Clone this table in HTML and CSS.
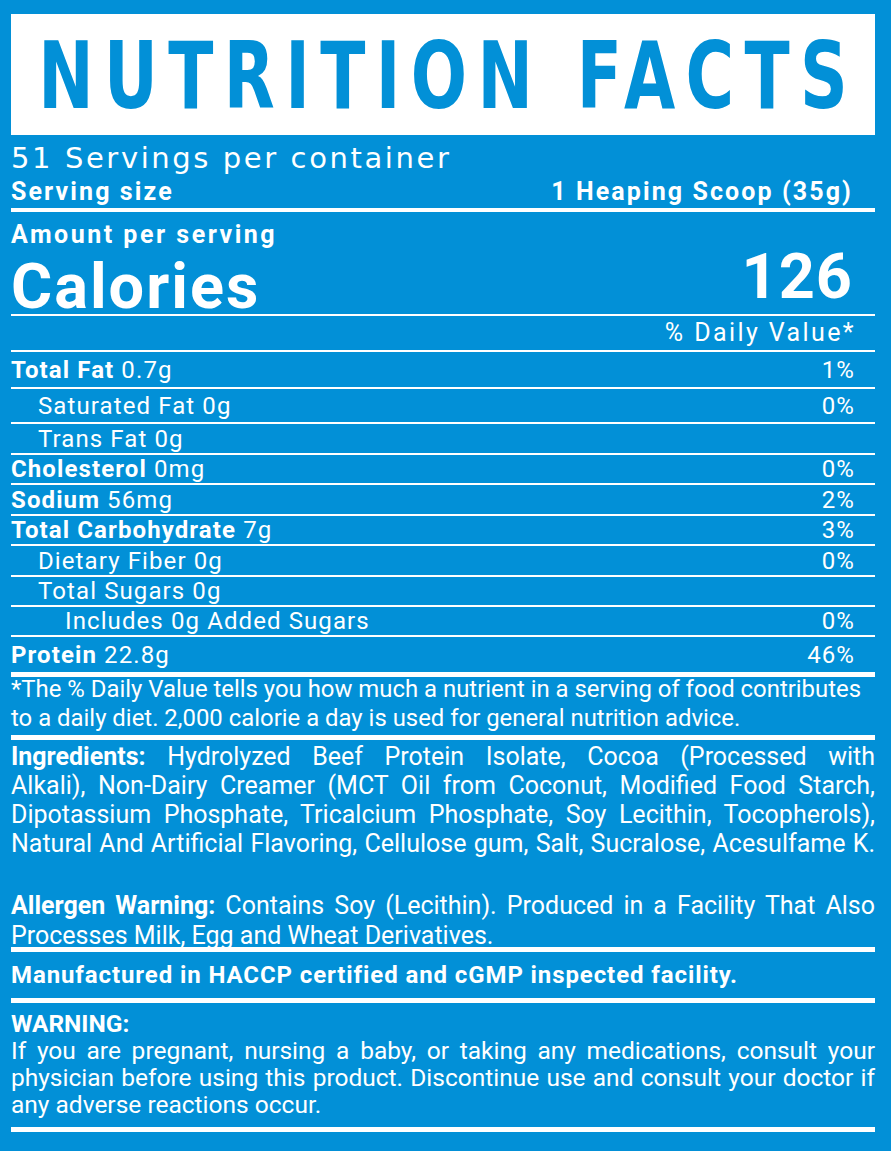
FILE: index.html
```html
<!DOCTYPE html>
<html lang="en">
<head>
<meta charset="utf-8">
<title>Nutrition Facts</title>
<link rel="stylesheet" href="styles.css">
</head>
<body>
<div class="label">
  <div class="title-box"><h1 class="title">NUTRITION FACTS</h1></div>
  <div class="servings">51 Servings per container</div>
  <div class="serving-size"><span>Serving size</span><span>1 Heaping Scoop (35g)</span></div>
  <div class="rule"></div>
  <div class="amount">Amount per serving</div>
  <div class="calories"><span class="cal-label">Calories</span><span class="cal-num">126</span></div>
  <div class="rule thin"></div>
  <div class="dv-head">% Daily Value*</div>
  <div class="rule thin"></div>
  <div class="row h35"><span><b>Total Fat</b> 0.7g</span><span>1%</span></div>
  <div class="rule thin"></div>
  <div class="row h33 indent1"><span>Saturated Fat 0g</span><span>0%</span></div>
  <div class="rule thin"></div>
  <div class="row h29 indent1"><span>Trans Fat 0g</span><span></span></div>
  <div class="rule thin"></div>
  <div class="row"><span><b>Cholesterol</b> 0mg</span><span>0%</span></div>
  <div class="rule thin"></div>
  <div class="row h29"><span><b>Sodium</b> 56mg</span><span>2%</span></div>
  <div class="rule thin"></div>
  <div class="row"><span><b>Total Carbohydrate</b> 7g</span><span>3%</span></div>
  <div class="rule thin"></div>
  <div class="row h29 indent1"><span>Dietary Fiber 0g</span><span>0%</span></div>
  <div class="rule thin"></div>
  <div class="row indent1"><span>Total Sugars 0g</span><span></span></div>
  <div class="rule thin"></div>
  <div class="row indent2"><span>Includes 0g Added Sugars</span><span>0%</span></div>
  <div class="rule thin"></div>
  <div class="row h35"><span><b>Protein</b> 22.8g</span><span>46%</span></div>
  <div class="rule thick"></div>
  <p class="footnote">*The % Daily Value tells you how much a nutrient in a serving of food contributes<br>to a daily diet. 2,000 calorie a day is used for general nutrition advice.</p>
  <div class="rule thick"></div>
  <p class="ingredients"><b>Ingredients:</b> Hydrolyzed Beef Protein Isolate, Cocoa (Processed with<br>Alkali), Non-Dairy Creamer (MCT Oil from Coconut, Modified Food Starch,<br>Dipotassium Phosphate, Tricalcium Phosphate, Soy Lecithin, Tocopherols),<br>Natural And Artificial Flavoring, Cellulose gum, Salt, Sucralose, Acesulfame K.</p>
  <p class="allergen"><span class="just-line"><b>Allergen Warning:</b> Contains Soy (Lecithin). Produced in a Facility That Also</span>Processes Milk, Egg and Wheat Derivatives.</p>
  <div class="rule thick over"></div>
  <p class="facility"><b>Manufactured in HACCP certified and cGMP inspected facility.</b></p>
  <div class="rule thick"></div>
  <div class="warning">
    <b class="warn-head">WARNING:</b>
    <p class="warn-text"><span class="just-line">If you are pregnant, nursing a baby, or taking any medications, consult your</span><span class="just-line">physician before using this product. Discontinue use and consult your doctor if</span>any adverse reactions occur.</p>
  </div>
  <div class="rule thick"></div>
</div>
</body>
</html>
```

FILE: styles.css
```css
html, body {
  margin: 0;
  padding: 0;
}
body {
  background: #0290d7;
  color: #ffffff;
  font-family: Roboto, "Liberation Sans", sans-serif;
}
.label {
  width: 864px;
  padding: 14px 16px 20px 11px;
}
.title-box {
  background: #ffffff;
  height: 121px;
  display: flex;
  align-items: center;
  justify-content: center;
  overflow: hidden;
}
.title {
  margin: 0;
  padding: 4px 0 0 13px;
  color: #0290d7;
  font-family: "DejaVu Sans Condensed", "DejaVu Sans", sans-serif;
  font-weight: 700;
  font-size: 92px;
  line-height: 1;
  letter-spacing: 13px;
  white-space: nowrap;
  flex: none;
  transform: scaleX(0.8);
}
.servings {
  font-family: "DejaVu Sans", sans-serif;
  font-size: 29px;
  line-height: 34px;
  letter-spacing: 2.6px;
  margin-top: 6px;
  white-space: nowrap;
}
.serving-size {
  display: flex;
  justify-content: space-between;
  font-weight: 700;
  font-size: 25px;
  line-height: 33px;
  letter-spacing: 2.1px;
  padding-right: 22px;
}
.rule {
  height: 4px;
  background: #ffffff;
}
.rule.thin {
  height: 2px;
}
.rule.thick {
  height: 5px;
}
.rule.over {
  position: relative;
  margin-top: -4px;
}
.amount {
  font-weight: 700;
  font-size: 25px;
  line-height: 34px;
  letter-spacing: 2.5px;
  margin-top: 6px;
}
.calories {
  display: flex;
  justify-content: space-between;
  align-items: flex-start;
  font-weight: 700;
  height: 62px;
  padding-right: 22px;
}
.cal-label {
  font-size: 63px;
  line-height: 62px;
  padding-top: 4px;
  letter-spacing: 2px;
}
.cal-num {
  font-size: 63px;
  line-height: 49px;
  letter-spacing: 1px;
}
.dv-head {
  text-align: right;
  font-size: 25px;
  line-height: 34px;
  letter-spacing: 2.4px;
  padding-right: 19px;
}
.row {
  display: flex;
  justify-content: space-between;
  align-items: center;
  font-size: 24px;
  height: 28px;
  letter-spacing: 1.1px;
  padding-right: 20px;
}
.row.h35 { height: 35px; }
.row.h33 { height: 33px; }
.row.h29 { height: 29px; }
.row b { font-weight: 700; }
.indent1 { padding-left: 27px; }
.indent2 { padding-left: 54px; }
.footnote {
  margin: -2px 0 0;
  padding-bottom: 2px;
  font-size: 23.9px;
  line-height: 29px;
  white-space: nowrap;
}
.ingredients, .allergen {
  margin: 0;
  font-size: 25px;
  line-height: 29px;
  text-align: justify;
  text-align-last: justify;
  white-space: nowrap;
}
.ingredients { padding-top: 2px; }
.allergen {
  margin-top: 33px;
  line-height: 30px;
  text-align-last: left;
}
.just-line {
  display: block;
  text-align: justify;
  text-align-last: justify;
}
.facility {
  margin: 0;
  font-size: 24px;
  line-height: 46px;
  letter-spacing: 0.9px;
}
.warning {
  font-size: 24.5px;
  line-height: 27px;
  padding: 7px 0 9px;
}
.warn-head { display: block; }
.warn-text { margin: 0; white-space: nowrap; }
```
